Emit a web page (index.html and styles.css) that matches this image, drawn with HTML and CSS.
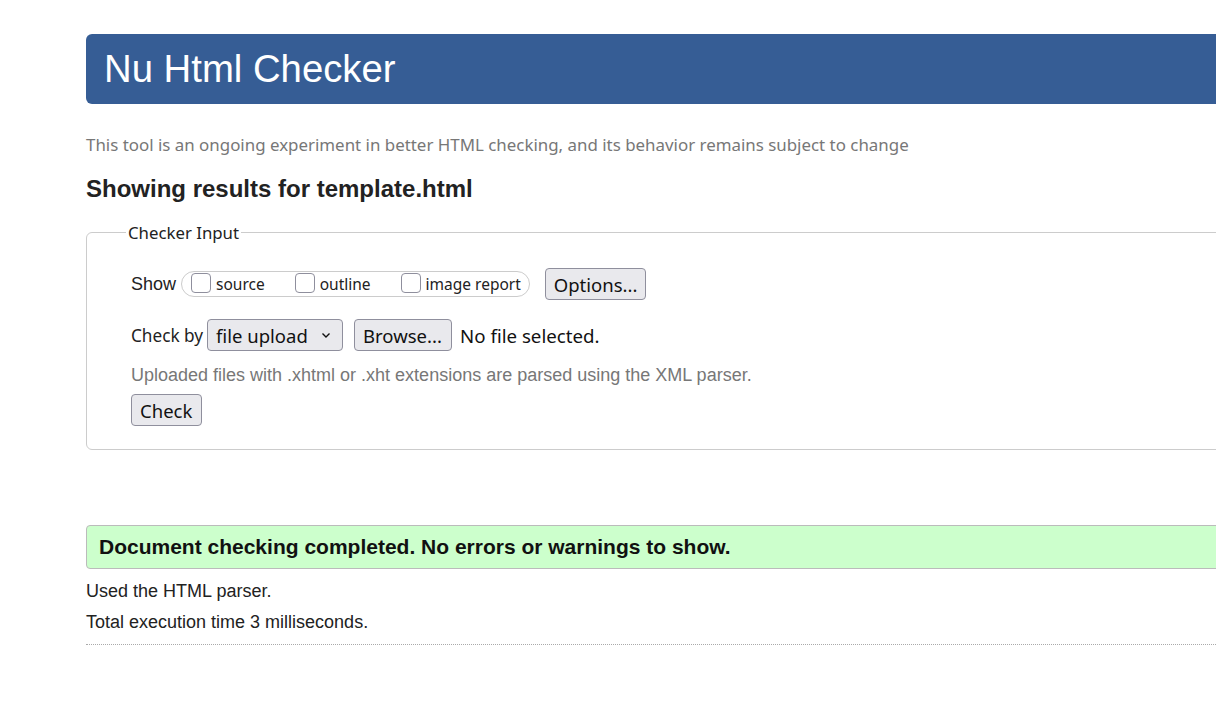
FILE: index.html
```html
<!DOCTYPE html>
<html lang="en">
<head>
<meta charset="utf-8">
<title>Nu Html Checker</title>
<link rel="stylesheet" href="styles.css">
</head>
<body>
<div class="page">
  <h1 class="banner">Nu Html Checker</h1>
  <p class="intro">This tool is an ongoing experiment in better HTML checking, and its behavior remains subject to change</p>
  <h2 class="results-title">Showing results for template.html</h2>
  <fieldset class="input-box">
    <legend class="legend">Checker Input</legend>
    <div class="row show-row">
      <span class="show-label">Show</span>
      <span class="pill">
        <label class="opt"><span class="cb"></span>source</label>
        <label class="opt"><span class="cb"></span>outline</label>
        <label class="opt"><span class="cb"></span>image report</label>
      </span>
      <span class="btn btn-options">Options...</span>
    </div>
    <div class="row by-row">
      <span class="by-label">Check by</span>
      <span class="btn select">file upload
        <svg class="chev" width="10" height="7" viewBox="0 0 10 7"><path d="M1.5 1.5 L5 5 L8.5 1.5" fill="none" stroke="#111" stroke-width="1.4"/></svg>
      </span>
      <span class="btn btn-browse">Browse...</span>
      <span class="nofile">No file selected.</span>
    </div>
    <p class="hint">Uploaded files with .xhtml or .xht extensions are parsed using the XML parser.</p>
    <span class="btn btn-check">Check</span>
  </fieldset>
  <p class="success">Document checking completed. No errors or warnings to show.</p>
  <p class="info">Used the HTML parser.</p>
  <p class="info">Total execution time 3 milliseconds.</p>
  <hr class="dots">
</div>
</body>
</html>
```
FILE: styles.css
```css
html, body {
  margin: 0;
  padding: 0;
  background: #fff;
  overflow: hidden;
}
body {
  font-family: "Liberation Sans", Arial, sans-serif;
  color: #222;
}
.page {
  width: 1300px;
  padding: 34px 0 0 86px;
}
.banner {
  margin: 0;
  height: 70px;
  box-sizing: border-box;
  padding: 0 18px;
  display: flex;
  align-items: center;
  background: #365d95;
  color: #fff;
  font-weight: normal;
  font-size: 38.3px;
  border-radius: 6px 0 0 6px;
}
.intro {
  margin: 29px 0 0 0;
  font-family: "Noto Sans", "Open Sans", sans-serif;
  font-size: 16.9px;
  line-height: 24px;
  color: #777;
}
.results-title {
  margin: 18px 0 0 0;
  font-size: 24px;
  line-height: 28px;
  font-weight: bold;
  color: #222;
}
.input-box {
  margin: 18px 0 0 0;
  border: 1px solid #ccc;
  border-radius: 6px 0 0 6px;
  padding: 14px 0 22px 44px;
  height: 229px;
  box-sizing: border-box;
  min-width: 0;
}
.legend {
  margin-left: -5px;
  padding: 0 2px;
  font-family: "Noto Sans", "Open Sans", sans-serif;
  font-size: 16.8px;
  color: #222;
}
.row {
  display: flex;
  align-items: center;
  white-space: nowrap;
}
.show-row {
  margin-top: 10px;
}
.show-label {
  font-size: 18px;
  margin-right: 5px;
}
.pill {
  display: flex;
  align-items: center;
  height: 26px;
  box-sizing: border-box;
  border: 1px solid #ccc;
  border-radius: 13px;
  padding: 0 8px 0 9px;
  font-family: "Noto Sans", "Open Sans", sans-serif;
  font-size: 15.5px;
}
.opt {
  display: flex;
  align-items: center;
  margin-right: 30px;
  white-space: nowrap;
}
.opt:last-child { margin-right: 0; }
.cb {
  width: 20px;
  height: 20px;
  box-sizing: border-box;
  border: 1px solid #8f8f9d;
  border-radius: 4px;
  margin-right: 5px;
  margin-top: -3px;
  background: #fff;
}
.btn {
  display: inline-flex;
  align-items: center;
  box-sizing: border-box;
  background: #e9e9ed;
  border: 1px solid #8f8f9d;
  border-radius: 4px;
  font-family: "Noto Sans", "Open Sans", sans-serif;
  font-size: 18.5px;
  color: #111;
  height: 32px;
  padding: 0 8px;
}
.btn-options {
  margin-left: 15px;
  width: 101px;
}
.by-row {
  margin-top: 19px;
}
.by-label {
  font-family: "Noto Sans", "Open Sans", sans-serif;
  font-size: 17.2px;
  margin-right: 4px;
}
.select {
  width: 136px;
  justify-content: space-between;
  padding: 0 8px 0 8px;
}
.chev { margin-right: 3px; }
.btn-browse {
  margin-left: 11px;
  width: 98px;
}
.nofile {
  margin-left: 8px;
  font-family: "Noto Sans", "Open Sans", sans-serif;
  font-size: 18.7px;
  color: #111;
}
.hint {
  margin: 13px 0 0 0;
  font-size: 18px;
  line-height: 22px;
  color: #777;
}
.btn-check {
  margin-top: 8px;
  width: 71px;
}
.success {
  margin: 75px 0 0 0;
  height: 44px;
  box-sizing: border-box;
  background: #ccffcc;
  border: 1px solid #bbb;
  border-radius: 4px 0 0 4px;
  padding: 0 12px;
  display: flex;
  align-items: center;
  font-size: 21px;
  font-weight: bold;
  color: #111;
}
.info {
  margin: 12px 0 0 0;
  font-size: 18px;
  line-height: 21px;
  color: #222;
}
.info + .info {
  margin-top: 10px;
}
.dots {
  margin: 11px 0 0 0;
  border: 0;
  border-top: 1px dotted #aaa;
  height: 0;
}
```
